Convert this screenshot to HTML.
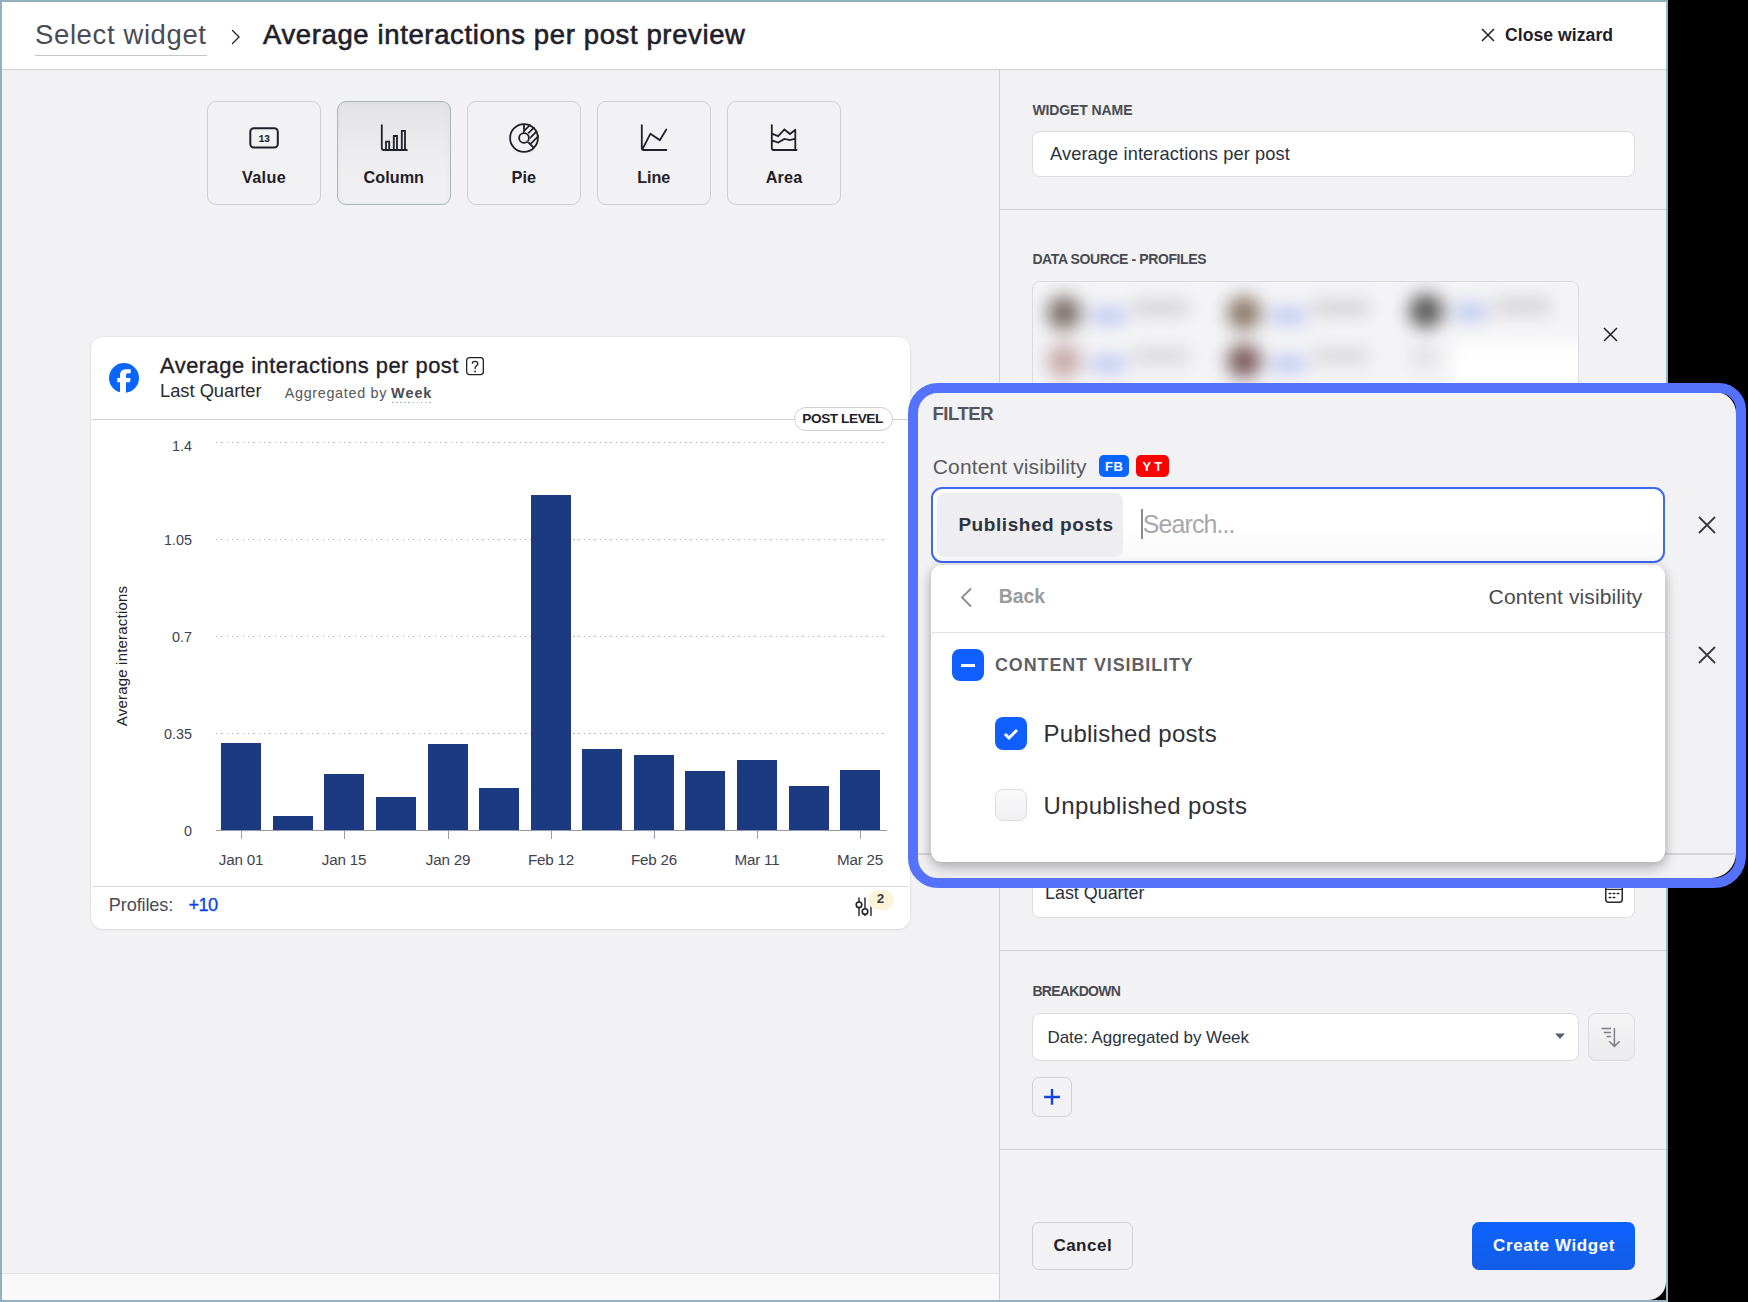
<!DOCTYPE html>
<html><head><meta charset="utf-8">
<style>
*{box-sizing:border-box;margin:0;padding:0}
html,body{width:1748px;height:1302px;overflow:hidden;background:#000}
body{position:relative;font-family:"Liberation Sans",sans-serif;color:#1f2029}
.a{position:absolute}
.t{position:absolute;white-space:pre;line-height:1}
.frame{position:absolute;left:0;top:0;width:1668px;height:1302px;border:2px solid #93b0be;border-right-color:#98b7c8;background:#000}
.page{position:absolute;left:2px;top:2px;width:1664px;height:1298px;background:#f2f2f4;border-bottom-right-radius:18px;overflow:hidden}
.hdr{position:absolute;left:0;top:0;width:1664px;height:68px;background:#fff;border-bottom:1px solid #d0d0d2}
.wbtn{position:absolute;top:101px;width:114px;height:104px;border:1px solid #cfcfd3;border-radius:9px;background:#f2f2f4}
.lbl{font-weight:700;color:#4a4a52}
.inp{position:absolute;background:#fff;border:1px solid #dcdce0;border-radius:8px}
.bar{position:absolute;width:40px;background:#1b3a82}
.grid{position:absolute;left:215.5px;width:670px;height:1.5px;background:repeating-linear-gradient(90deg,#adb8b8 0,#adb8b8 1.5px,transparent 1.5px,transparent 5.33px)}
.ylab{position:absolute;right:1556px;font-size:14.4px;line-height:1;color:#3d4250;white-space:pre}
.xlab{position:absolute;font-size:15.2px;letter-spacing:-0.2px;line-height:1;color:#3d4250;white-space:pre;transform:translateX(-50%)}
.tick{position:absolute;top:831px;width:1.4px;height:7.5px;background:#9aa0ad;margin-left:0.6px}
</style></head><body>
<div class="frame"></div>
<div class="page">
  <!-- header -->
  <div class="hdr"></div>
</div>

<!-- ===== header content (absolute page coords) ===== -->
<div class="t" style="left:35px;top:20.7px;font-size:27.5px;letter-spacing:0.62px;color:#4b4b55">Select widget</div>
<div class="a" style="left:35px;top:55px;width:172px;height:1px;background:#c6c6ca"></div>
<svg class="a" style="left:229px;top:28px" width="14" height="18" viewBox="0 0 14 18"><path d="M3.5 2.5 L10 9 L3.5 15.5" fill="none" stroke="#1f2029" stroke-width="1.3" stroke-linecap="round"/></svg>
<div class="t" style="left:263px;top:20.7px;font-size:27.5px;font-weight:400;letter-spacing:0.62px;color:#1f2029;-webkit-text-stroke:0.6px #1f2029">Average interactions per post preview</div>
<svg class="a" style="left:1480px;top:27px" width="16" height="16" viewBox="0 0 16 16"><path d="M2 2 L14 14 M14 2 L2 14" stroke="#1f2029" stroke-width="1.5"/></svg>
<div class="t" style="left:1505px;top:27.1px;font-size:17.6px;font-weight:700;letter-spacing:0.05px;color:#1f2029">Close wizard</div>


<!-- ===== widget type buttons ===== -->
<div class="wbtn" style="left:207px"></div>
<div class="wbtn" style="left:337px;background:linear-gradient(#e3e3e5,#eeeef0 60%,#f1f1f3);border-color:#abb4b8;box-shadow:inset 0 0 6px rgba(0,0,0,0.04)"></div>
<div class="wbtn" style="left:467px"></div>
<div class="wbtn" style="left:597px"></div>
<div class="wbtn" style="left:727px"></div>
<!-- icons -->
<svg class="a" style="left:248px;top:126px" width="32" height="24" viewBox="0 0 32 24"><rect x="2.3" y="2.3" width="27.5" height="19.2" rx="3.5" fill="none" stroke="#1f2029" stroke-width="2"/><text x="16" y="15.6" text-anchor="middle" font-family="Liberation Mono" font-weight="700" font-size="10" letter-spacing="-0.5" fill="#1f2029">13</text></svg>
<svg class="a" style="left:378px;top:122px" width="32" height="32" viewBox="0 0 32 32"><path d="M3.8 3.2 V26 Q3.8 28 5.8 28 H28.9 M8 28 V19.7 H11.2 V28 M15.8 28 V14 H19 V28 M23.8 28 V8.9 H27 V28" fill="none" stroke="#1f2029" stroke-width="1.8" stroke-linecap="round"/></svg>
<svg class="a" style="left:507px;top:121px" width="34" height="34" viewBox="0 0 34 34"><defs><clipPath id="wedge"><path d="M17 17 L17 2 A15 15 0 0 1 27.6 27.6 Z"/></clipPath></defs><circle cx="17" cy="17" r="13.9" fill="none" stroke="#1f2029" stroke-width="1.8"/><circle cx="17" cy="17" r="4.9" fill="none" stroke="#1f2029" stroke-width="1.8"/><path d="M17 3.5 V12.1 M20.5 20.5 L26.8 26.8" stroke="#1f2029" stroke-width="1.8"/><g clip-path="url(#wedge)"><path d="M0 27 L27 0 M0 33.5 L33.5 0 M0 40 L40 0 M0 46.5 L46.5 0" stroke="#1f2029" stroke-width="1.6"/><circle cx="17" cy="17" r="6.2" fill="#f2f2f4"/><circle cx="17" cy="17" r="4.9" fill="none" stroke="#1f2029" stroke-width="1.8"/></g></svg>
<svg class="a" style="left:638px;top:122px" width="32" height="32" viewBox="0 0 32 32"><path d="M3.8 3.2 V26 Q3.8 28 5.8 28 H28.4 M4.9 26.4 L12.4 11.7 L21.8 18.1 L28.3 7.5" fill="none" stroke="#1f2029" stroke-width="1.8" stroke-linecap="round" stroke-linejoin="miter"/></svg>
<svg class="a" style="left:767px;top:122px" width="32" height="32" viewBox="0 0 32 32"><path d="M4.8 3.1 V26 Q4.8 28 6.8 28 H29.6 M28.3 7.8 V28 M4.8 11.7 L11.2 14.1 L17.4 7.5 L23 12 L28.3 7.8 M4.8 18.3 L11.2 20.6 L17.4 16.9 L23 18.1 L28.3 16.6" fill="none" stroke="#1f2029" stroke-width="1.8" stroke-linecap="round"/></svg>
<div class="t" style="left:242px;top:168.9px;font-size:16.2px;font-weight:700;letter-spacing:0.35px">Value</div>
<div class="t" style="left:363.5px;top:168.9px;font-size:16.2px;font-weight:700;letter-spacing:0.05px">Column</div>
<div class="t" style="left:511.5px;top:168.9px;font-size:16.2px;font-weight:700;letter-spacing:0.09px">Pie</div>
<div class="t" style="left:637.3px;top:168.9px;font-size:16.2px;font-weight:700;letter-spacing:-0.09px">Line</div>
<div class="t" style="left:765.7px;top:168.9px;font-size:16.2px;font-weight:700;letter-spacing:0.2px">Area</div>


<!-- ===== chart card ===== -->
<div class="a" style="left:91px;top:337px;width:819px;height:592px;background:#fff;border-radius:12px;box-shadow:0 0 0 1px rgba(0,0,0,0.035),0 1px 3px rgba(0,0,0,0.06)"></div>
<svg class="a" style="left:109px;top:363px" width="30" height="30" viewBox="0 0 30 30"><circle cx="15" cy="15" r="15" fill="#0866ff"/><path d="M11 30 V19.2 H8.2 V15 H11 V12.2 C11 8.3 13.3 6.2 17 6.2 H21.7 V10.3 H18.8 C17.6 10.3 17 11 17 12.2 V15 H21.6 L21 19.2 H17 V30 Z" fill="#fff"/></svg>
<div class="t" style="left:160px;top:354.5px;font-size:21.9px;letter-spacing:0.5px;color:#1f2029;-webkit-text-stroke:0.35px #1f2029">Average interactions per post</div>
<svg class="a" style="left:465px;top:356px" width="20" height="20" viewBox="0 0 20 20"><rect x="1.65" y="1.65" width="16.7" height="17" rx="2.8" fill="none" stroke="#1f2029" stroke-width="1.3"/><path d="M7.3 7.8 C7.3 6.1 8.5 5.3 10 5.3 C11.6 5.3 12.8 6.3 12.8 7.8 C12.8 9.5 10.2 10 10.2 11.6 V12.9" fill="none" stroke="#1f2029" stroke-width="1.3"/><circle cx="10.1" cy="15.4" r="0.95" fill="#1f2029"/></svg>
<div class="t" style="left:160px;top:381.7px;font-size:18.3px;color:#2a2a30">Last Quarter</div>
<div class="t" style="left:284.7px;top:385.5px;font-size:14.4px;color:#55555c;letter-spacing:0.67px">Aggregated by </div>
<div class="t" style="left:391.1px;top:385.5px;font-size:14.4px;font-weight:700;color:#4a4a52;letter-spacing:0.98px">Week</div>
<div class="a" style="left:391.5px;top:401.7px;width:40px;height:1.3px;background:repeating-linear-gradient(90deg,#8fb4ee 0,#8fb4ee 1.6px,transparent 1.6px,transparent 4.1px)"></div>
<div class="a" style="left:92px;top:419px;width:817px;height:1px;background:#d0d0d2"></div>
<div class="a" style="left:794px;top:407px;width:99px;height:24px;border:1px solid #cfcfd3;border-radius:12px;background:#fff"></div>
<div class="t" style="left:802.3px;top:412.2px;font-size:13.6px;font-weight:700;letter-spacing:-0.4px;color:#1f2029">POST LEVEL</div>
<div class="grid" style="top:441.9px"></div>
<div class="grid" style="top:538.5px"></div>
<div class="grid" style="top:635.8px"></div>
<div class="grid" style="top:732.8px"></div>

<div class="ylab" style="top:438.6px">1.4</div>
<div class="ylab" style="top:532.6px">1.05</div>
<div class="ylab" style="top:629.8px">0.7</div>
<div class="ylab" style="top:726.8px">0.35</div>
<div class="ylab" style="top:823.8px">0</div>

<div class="t" style="left:121px;top:656px;font-size:15px;color:#1f2029;transform:translate(-50%,-50%) rotate(-90deg);letter-spacing:0.2px">Average interactions</div>
<div class="bar" style="left:221px;top:743px;height:87.5px"></div>
<div class="bar" style="left:273px;top:815.6px;height:14.9px"></div>
<div class="bar" style="left:324px;top:774px;height:56.5px"></div>
<div class="bar" style="left:376px;top:796.6px;height:33.9px"></div>
<div class="bar" style="left:428px;top:743.6px;height:86.9px"></div>
<div class="bar" style="left:479px;top:788px;height:42.5px"></div>
<div class="bar" style="left:531px;top:495px;height:335.5px"></div>
<div class="bar" style="left:582px;top:749px;height:81.5px"></div>
<div class="bar" style="left:634px;top:755px;height:75.5px"></div>
<div class="bar" style="left:685px;top:771px;height:59.5px"></div>
<div class="bar" style="left:737px;top:760px;height:70.5px"></div>
<div class="bar" style="left:789px;top:786px;height:44.5px"></div>
<div class="bar" style="left:840px;top:770px;height:60.5px"></div>

<div class="a" style="left:215.5px;top:830.2px;width:671.5px;height:1.3px;background:#9399a6"></div>
<div class="tick" style="left:240.25px"></div>
<div class="xlab" style="left:241px;top:852.1px">Jan 01</div>
<div class="tick" style="left:343.25px"></div>
<div class="xlab" style="left:344px;top:852.1px">Jan 15</div>
<div class="tick" style="left:447.25px"></div>
<div class="xlab" style="left:448px;top:852.1px">Jan 29</div>
<div class="tick" style="left:550.25px"></div>
<div class="xlab" style="left:551px;top:852.1px">Feb 12</div>
<div class="tick" style="left:653.25px"></div>
<div class="xlab" style="left:654px;top:852.1px">Feb 26</div>
<div class="tick" style="left:756.25px"></div>
<div class="xlab" style="left:757px;top:852.1px">Mar 11</div>
<div class="tick" style="left:859.25px"></div>
<div class="xlab" style="left:860px;top:852.1px">Mar 25</div>

<div class="a" style="left:92px;top:886px;width:817px;height:1px;background:#d8d8da"></div>
<div class="t" style="left:108.8px;top:895.7px;font-size:18.2px;letter-spacing:-0.15px;color:#4a4b55">Profiles:</div>
<div class="t" style="left:188.5px;top:895.7px;font-size:18.2px;letter-spacing:-0.6px;color:#0b46e8;-webkit-text-stroke:0.3px #0b46e8">+10</div>
<svg class="a" style="left:853px;top:894px" width="24" height="26" viewBox="0 0 24 26"><path d="M6 4 V8 M6 13.6 V21.5 M12 4 V14.8 M12 20.4 V21.5 M18 4 V21.5" stroke="#3a3c48" stroke-width="1.6" stroke-linecap="round" fill="none"/><circle cx="6" cy="10.8" r="2.8" fill="#fff" stroke="#1f2029" stroke-width="1.6"/><circle cx="12" cy="17.6" r="2.8" fill="#fff" stroke="#1f2029" stroke-width="1.6"/></svg>
<div class="a" style="left:868.3px;top:890px;width:25.5px;height:20px;border-radius:10px;background:#fcf3d8"></div>
<div class="t" style="left:876.8px;top:891.5px;font-size:13.5px;font-weight:700;color:#3a3c48">2</div>


<!-- ===== right panel ===== -->
<div class="a" style="left:999px;top:70px;width:1px;height:1230px;background:#d0d0d2"></div>
<div class="a" style="left:2px;top:1273px;width:997px;height:1px;background:#e2e2e4"></div>
<div class="a" style="left:2px;top:1274px;width:997px;height:26px;background:#f9f9fa"></div>
<div class="t" style="left:1032.4px;top:103.4px;font-size:14px;font-weight:700;color:#4a4a52;letter-spacing:-0.1px">WIDGET NAME</div>
<div class="inp" style="left:1032px;top:131px;width:603px;height:46px"></div>
<div class="t" style="left:1050px;top:144.8px;font-size:18.2px;color:#2a3140;letter-spacing:0.13px">Average interactions per post</div>
<div class="a" style="left:1000px;top:209px;width:666px;height:1px;background:#d0d0d2"></div>
<div class="t" style="left:1032.4px;top:252.3px;font-size:14px;font-weight:700;color:#4a4a52;letter-spacing:-0.4px">DATA SOURCE - PROFILES</div>
<div class="inp" style="left:1032px;top:281px;width:547px;height:110px;overflow:hidden;background:#f4f4f6">
<div class="a" style="left:0;top:0;width:547px;height:110px;filter:blur(9px)">
 <div class="a" style="left:14px;top:14px;width:34px;height:34px;border-radius:17px;background:#7a6e68"></div>
 <div class="a" style="left:58px;top:28px;width:34px;height:12px;background:#a8b8f0"></div>
 <div class="a" style="left:100px;top:20px;width:55px;height:12px;background:#c8c8ca"></div>
 <div class="a" style="left:194px;top:14px;width:34px;height:34px;border-radius:17px;background:#8a7868"></div>
 <div class="a" style="left:238px;top:28px;width:34px;height:12px;background:#a8b8f0"></div>
 <div class="a" style="left:280px;top:20px;width:55px;height:12px;background:#c8c8ca"></div>
 <div class="a" style="left:376px;top:12px;width:34px;height:34px;border-radius:17px;background:#585858"></div>
 <div class="a" style="left:420px;top:24px;width:34px;height:12px;background:#a8b8f0"></div>
 <div class="a" style="left:462px;top:18px;width:55px;height:12px;background:#c8c8ca"></div>
 <div class="a" style="left:14px;top:62px;width:34px;height:34px;border-radius:17px;background:#c8aaa8"></div>
 <div class="a" style="left:58px;top:76px;width:34px;height:12px;background:#a8b8f0"></div>
 <div class="a" style="left:100px;top:68px;width:55px;height:12px;background:#d0d0d2"></div>
 <div class="a" style="left:194px;top:62px;width:34px;height:34px;border-radius:17px;background:#7a5a5a"></div>
 <div class="a" style="left:238px;top:76px;width:34px;height:12px;background:#a8b8f0"></div>
 <div class="a" style="left:280px;top:68px;width:55px;height:12px;background:#d0d0d2"></div>
 <div class="a" style="left:380px;top:68px;width:24px;height:14px;background:#d8d8da"></div>
 <div class="a" style="left:420px;top:60px;width:140px;height:60px;background:#fff"></div>
</div></div>
<svg class="a" style="left:1602px;top:326px" width="17" height="17" viewBox="0 0 17 17"><path d="M2 2 L15 15 M15 2 L2 15" stroke="#1f2029" stroke-width="1.5"/></svg>
<div class="inp" style="left:1032px;top:860px;width:603px;height:57.6px"></div>
<div class="t" style="left:1045px;top:884.9px;font-size:17.9px;color:#2a3140">Last Quarter</div>
<svg class="a" style="left:1603px;top:883px" width="22" height="22" viewBox="0 0 22 22"><rect x="2.75" y="-1" width="16.5" height="20.2" rx="3" fill="none" stroke="#2a2a30" stroke-width="1.5"/><path d="M2.75 6.4 H19.25" stroke="#2a2a30" stroke-width="1.3"/><path d="M6.2 10.5 H7.8 M10.2 10.5 H11.8 M14.2 10.5 H15.8 M6.2 14.5 H7.8 M10.2 14.5 H11.8" stroke="#1f2029" stroke-width="1.4" stroke-linecap="round"/></svg>
<div class="a" style="left:1000px;top:950px;width:666px;height:1px;background:#d0d0d2"></div>
<div class="t" style="left:1032.4px;top:984.2px;font-size:14px;font-weight:700;color:#4a4a52;letter-spacing:-0.7px">BREAKDOWN</div>
<div class="inp" style="left:1032px;top:1013px;width:547px;height:47.5px"></div>
<div class="t" style="left:1047.5px;top:1028.5px;font-size:17px;color:#2a3140;letter-spacing:-0.06px">Date: Aggregated by Week</div>
<svg class="a" style="left:1553px;top:1032px" width="14" height="9" viewBox="0 0 14 9"><path d="M2 1.5 H12 L7 7 Z" fill="#5a6070"/></svg>
<div class="a" style="left:1587.5px;top:1013px;width:47px;height:47.5px;border:1px solid #dcdce0;border-radius:8px;background:linear-gradient(#f5f5f6,#ebebed)"></div>
<svg class="a" style="left:1599px;top:1024.8px" width="24" height="26" viewBox="0 0 24 26"><path d="M2.6 3.5 H12 M4.8 7.5 H12 M7.6 11.5 H12 M15.4 3 V21.5 M10.2 16.2 L15.4 21.4 L20.6 16.2" fill="none" stroke="#7e7e86" stroke-width="1.5"/></svg>
<div class="a" style="left:1032px;top:1077px;width:40px;height:39.5px;border:1px solid #d0d0d4;border-radius:7px;background:#f2f2f4"></div>
<svg class="a" style="left:1042px;top:1087px" width="20" height="20" viewBox="0 0 20 20"><path d="M10 2 V17.7 M2.2 10 H18" stroke="#1246e0" stroke-width="2.4"/></svg>
<div class="a" style="left:1000px;top:1149px;width:666px;height:1px;background:#d0d0d2"></div>
<div class="a" style="left:1032px;top:1222px;width:101px;height:48px;border:1px solid #cfcfd3;border-radius:7px;background:#f2f2f4"></div>
<div class="t" style="left:1053.4px;top:1237.4px;font-size:17px;font-weight:700;color:#1f2029;letter-spacing:0.5px">Cancel</div>
<div class="a" style="left:1472px;top:1222px;width:163px;height:48px;border-radius:7px;background:linear-gradient(#0d63ff,#135ce5)"></div>
<div class="t" style="left:1493.1px;top:1237.4px;font-size:17px;font-weight:700;color:#fff;letter-spacing:0.6px">Create Widget</div>


<!-- ===== callout ===== -->
<div class="a" style="left:911px;top:385px;width:832px;height:500px;border-radius:27px 24px 29px 27px;background:linear-gradient(90deg,#f2f2f4 0,#f2f2f4 50%,#000 50%)"></div>
<div class="a" style="left:918px;top:392px;width:818px;height:486px;border-radius:0 21px 25px 0;background:#f2f2f4;overflow:hidden">
  <div class="a" style="left:0;top:461px;width:818px;height:1.5px;background:#d6d6d8"></div>
</div>
<div class="t" style="left:932.5px;top:405.0px;font-size:18.5px;font-weight:700;color:#55555b;letter-spacing:-0.47px">FILTER</div>
<div class="t" style="left:932.8px;top:455.5px;font-size:21px;color:#5a5a60;letter-spacing:0.12px">Content visibility</div>
<div class="a" style="left:1099px;top:455px;width:30px;height:22px;border-radius:5px;background:#0866ff"></div>
<div class="t" style="left:1105px;top:460.0px;font-size:13px;font-weight:700;color:#fff;letter-spacing:0.6px">FB</div>
<div class="a" style="left:1136px;top:455px;width:33px;height:22px;border-radius:5px;background:#fe0000"></div>
<div class="t" style="left:1142.5px;top:460.0px;font-size:13px;font-weight:700;color:#fff;letter-spacing:3.2px">YT</div>
<div class="a" style="left:931px;top:487px;width:734px;height:76px;border:2px solid #3e67f2;border-radius:11px;background:linear-gradient(#fff 55%,#f8f8f9)"></div>
<div class="a" style="left:937px;top:493px;width:186px;height:64px;border-radius:7px;background:#eeeef0"></div>
<div class="t" style="left:958.4px;top:515.2px;font-size:19px;font-weight:700;color:#2d3340;letter-spacing:0.56px">Published posts</div>
<div class="a" style="left:1141px;top:509px;width:2px;height:30px;background:#8a8a90"></div>
<div class="t" style="left:1142.7px;top:511.8px;font-size:25px;color:#a8a8ac;letter-spacing:-0.9px">Search...</div>
<svg class="a" style="left:1697px;top:515px" width="20" height="20" viewBox="0 0 20 20"><path d="M2 2 L18 18 M18 2 L2 18" stroke="#38383e" stroke-width="1.8"/></svg>
<svg class="a" style="left:1697px;top:645px" width="20" height="20" viewBox="0 0 20 20"><path d="M2 2 L18 18 M18 2 L2 18" stroke="#38383e" stroke-width="1.8"/></svg>
<div class="a" style="left:930.8px;top:564.5px;width:734px;height:297.5px;border-radius:11px;background:#fff;box-shadow:0 6px 14px rgba(0,0,0,0.26),0 0 10px rgba(0,0,0,0.10)"></div>
<svg class="a" style="left:958px;top:586px" width="16" height="23" viewBox="0 0 16 23"><path d="M13 2.5 L4 11.5 L13 20.5" fill="none" stroke="#8a8a90" stroke-width="1.8"/></svg>
<div class="t" style="left:998.7px;top:587.2px;font-size:19.4px;font-weight:700;color:#9a9a9e">Back</div>
<div class="t" style="left:1488.6px;top:586.4px;font-size:21px;color:#4a4a50;letter-spacing:0.12px">Content visibility</div>
<div class="a" style="left:930px;top:631.5px;width:735px;height:1.5px;background:#e2e2e4"></div>
<div class="a" style="left:951.5px;top:649px;width:32px;height:32px;border-radius:8px;background:#0f5fff"></div>
<div class="a" style="left:961px;top:664px;width:14px;height:3px;background:#fff"></div>
<div class="t" style="left:995px;top:657.4px;font-size:17.9px;font-weight:700;color:#606066;letter-spacing:0.93px">CONTENT VISIBILITY</div>
<div class="a" style="left:995px;top:717px;width:32px;height:33px;border-radius:8px;background:#0f5fff"></div>
<svg class="a" style="left:995px;top:717px" width="32" height="33" viewBox="0 0 32 33"><path d="M10 17 L14 21 L22 13" fill="none" stroke="#fff" stroke-width="3"/></svg>
<div class="t" style="left:1043.5px;top:722.3px;font-size:24px;color:#303036;letter-spacing:0.27px">Published posts</div>
<div class="a" style="left:995px;top:789px;width:32px;height:32px;border-radius:8px;background:linear-gradient(#fafafb,#f0f0f2);border:1.5px solid #dcdce0"></div>
<div class="t" style="left:1043.5px;top:793.8px;font-size:24px;color:#303036;letter-spacing:0.37px">Unpublished posts</div>
<div class="a" style="left:908px;top:382.5px;width:838px;height:505px;border:10px solid #5472fc;border-radius:30px 27px 32px 30px"></div>

</body></html>
